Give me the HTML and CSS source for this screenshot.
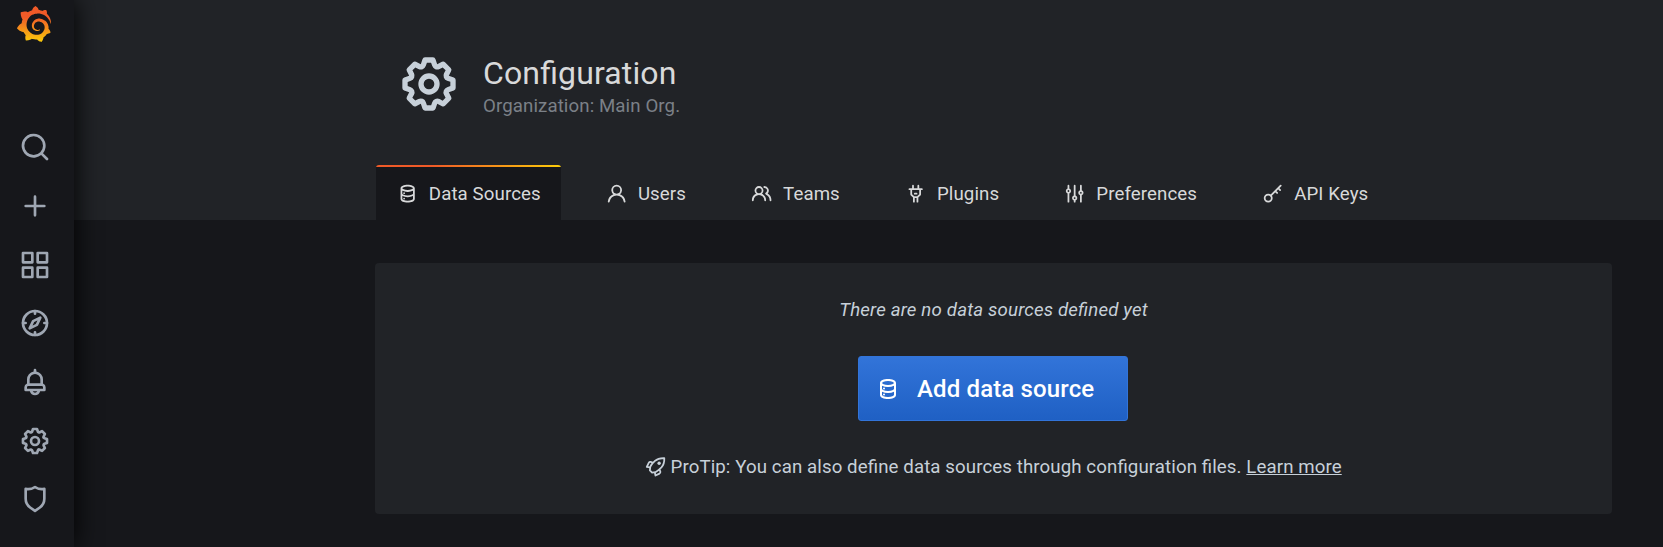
FILE: index.html
```html
<!DOCTYPE html>
<html lang="en">
<head>
<meta charset="utf-8">
<title>Configuration: Data Sources</title>
<link rel="stylesheet" href="styles.css">
</head>
<body>
<svg class="sprite" width="0" height="0">
  <symbol id="cog" viewBox="0 0 24 24"><path d="M21.32,9.55l-1.89-.63.89-1.78A1,1,0,0,0,20.13,6L18,3.87a1,1,0,0,0-1.15-.19l-1.78.89-.63-1.89A1,1,0,0,0,13.5,2h-3a1,1,0,0,0-.95.68L8.92,4.57,7.14,3.68A1,1,0,0,0,6,3.87L3.87,6a1,1,0,0,0-.19,1.15l.89,1.78-1.89.63A1,1,0,0,0,2,10.5v3a1,1,0,0,0,.68.95l1.89.63-.89,1.78A1,1,0,0,0,3.87,18L6,20.13a1,1,0,0,0,1.15.19l1.78-.89.63,1.89a1,1,0,0,0,.95.68h3a1,1,0,0,0,.95-.68l.63-1.89,1.78.89A1,1,0,0,0,18,20.13L20.13,18a1,1,0,0,0,.19-1.15l-.89-1.78,1.89-.63A1,1,0,0,0,22,13.5v-3A1,1,0,0,0,21.32,9.55ZM20,12.78l-1.2.4A2,2,0,0,0,17.64,16l.57,1.14-1.1,1.1L16,17.64a2,2,0,0,0-2.79,1.16l-.4,1.2H11.22l-.4-1.2A2,2,0,0,0,8,17.64l-1.14.57-1.1-1.1L6.36,16A2,2,0,0,0,5.2,13.18L4,12.78V11.22l1.2-.4A2,2,0,0,0,6.36,8L5.79,6.89l1.1-1.1L8,6.36A2,2,0,0,0,10.82,5.2l.4-1.2h1.56l.4,1.2A2,2,0,0,0,16,6.36l1.14-.57,1.1,1.1L17.64,8a2,2,0,0,0,1.16,2.79l1.2.4ZM12,8a4,4,0,1,0,4,4A4,4,0,0,0,12,8Zm0,6a2,2,0,1,1,2-2A2,2,0,0,1,12,14Z"/></symbol>
  <symbol id="database" viewBox="0 0 24 24"><path d="M8,16.5a1,1,0,1,0,1,1A1,1,0,0,0,8,16.5ZM12,2C8,2,4,3.37,4,6V18c0,2.63,4,4,8,4s8-1.37,8-4V6C20,3.37,16,2,12,2Zm6,16c0,.71-2.28,2-6,2s-6-1.29-6-2V14.73A13.16,13.16,0,0,0,12,16a13.16,13.16,0,0,0,6-1.27Zm0-6c0,.71-2.28,2-6,2s-6-1.29-6-2V8.73A13.16,13.16,0,0,0,12,10a13.16,13.16,0,0,0,6-1.27ZM12,8C8.28,8,6,6.71,6,6s2.28-2,6-2,6,1.29,6,2S15.72,8,12,8ZM8,10.5a1,1,0,1,0,1,1A1,1,0,0,0,8,10.5Z"/></symbol>
</svg>
<div class="app">
  <nav class="sidemenu">
    <a class="logo"><svg width="34" height="36" viewBox="8 0 335 365" preserveAspectRatio="none"><defs><linearGradient id="flame" gradientUnits="userSpaceOnUse" x1="175" y1="445" x2="175" y2="114"><stop offset="0" stop-color="#fff100"/><stop offset="1" stop-color="#f05a28"/></linearGradient></defs><path fill="url(#flame)" d="M342,161.2c-0.6-6.1-1.6-13.1-3.6-20.9c-2-7.7-5-16.2-9.4-25c-4.4-8.8-10.1-17.9-17.5-26.8c-2.9-3.5-6.1-6.9-9.5-10.2c5.1-20.3-6.2-37.9-6.2-37.9c-19.5-1.2-31.9,6.1-36.5,9.4c-0.8-0.3-1.5-0.7-2.3-1c-3.3-1.3-6.7-2.6-10.3-3.7c-3.5-1.1-7.1-2.1-10.8-3c-3.7-0.9-7.4-1.6-11.2-2.2c-0.7-0.1-1.3-0.2-2-0.3c-8.5-27.2-32.9-38.6-32.9-38.6c-27.3,17.3-32.4,41.5-32.4,41.5s-0.1,0.5-0.3,1.4c-1.5,0.4-3,0.9-4.5,1.3c-2.1,0.6-4.2,1.4-6.2,2.2c-2.1,0.8-4.1,1.6-6.2,2.5c-4.1,1.8-8.2,3.8-12.2,6c-3.9,2.2-7.7,4.6-11.4,7.1c-0.5-0.2-1-0.4-1-0.4c-37.8-14.4-71.3,2.9-71.3,2.9c-3.1,40.2,15.1,65.5,18.7,70.1c-0.9,2.5-1.7,5-2.5,7.5c-2.8,9.1-4.9,18.4-6.2,28.1c-0.2,1.4-0.4,2.8-0.5,4.2C18.8,192.7,8.5,228,8.5,228c29.1,33.5,63.1,35.6,63.1,35.6c0,0,0.1-0.1,0.1-0.1c4.3,7.7,9.3,15,14.9,21.9c2.4,2.9,4.8,5.6,7.4,8.3c-10.6,30.4,1.5,55.6,1.5,55.6c32.4,1.2,53.7-14.2,58.2-17.7c3.2,1.1,6.5,2.1,9.8,2.9c10,2.6,20.2,4.1,30.4,4.5c2.5,0.1,5.1,0.2,7.6,0.1l1.2,0l0.8,0l1.6,0l1.6-0.1l0,0.1c15.3,21.8,42.1,24.9,42.1,24.9c19.1-20.1,20.2-40.1,20.2-44.4l0,0c0,0,0-0.1,0-0.3c0-0.4,0-0.6,0-0.6l0,0c0-0.3,0-0.6,0-0.9c4-2.8,7.8-5.8,11.4-9.1c7.6-6.9,14.3-14.8,19.9-23.3c0.5-0.8,1-1.6,1.5-2.4c21.6,1.2,36.9-13.4,36.9-13.4c-3.6-22.5-16.4-33.5-19.1-35.6l0,0c0,0-0.1-0.1-0.3-0.2c-0.2-0.1-0.2-0.2-0.2-0.2c-0.1-0.1-0.3-0.2-0.5-0.3c0.1-1.4,0.2-2.7,0.3-4.1c0.2-2.4,0.2-4.9,0.2-7.3l0-1.8l0-0.9l0-1.1l-0.1-1.5l-0.1-2c0-0.7-0.1-1.3-0.2-1.9c-0.1-0.6-0.1-1.3-0.2-1.9l-0.2-1.9l-0.3-1.9c-0.4-2.5-0.8-4.9-1.4-7.4c-2.3-9.7-6.1-18.9-11-27.2c-5-8.3-11.2-15.6-18.3-21.8c-7-6.2-14.9-11.2-23.1-14.9c-8.3-3.7-16.9-6.1-25.5-7.2c-4.3-0.6-8.6-0.8-12.9-0.7l-1.6,0l-0.9,0l-0.7,0l-1.6,0.1c-0.6,0-1.2,0.1-1.7,0.1c-2.2,0.2-4.4,0.5-6.5,0.9c-8.6,1.6-16.7,4.7-23.8,9c-7.1,4.3-13.3,9.6-18.3,15.6c-5,6-8.9,12.7-11.6,19.6c-2.7,6.9-4.2,14.1-4.6,21c-0.1,1.7-0.1,3.5-0.1,5.2c0,0.4,0,0.9,0,1.3l0.1,1.4c0.1,0.8,0.1,1.7,0.2,2.5c0.3,3.5,1,6.9,1.9,10.1c1.9,6.5,4.9,12.4,8.6,17.4c3.7,5,8.2,9.1,12.9,12.4c4.7,3.2,9.8,5.5,14.8,7c5,1.5,10,2.1,14.7,2.1c1.2,0,2.3,0,3.5-0.1c0.8,0,1.6-0.1,2.4-0.3c0.9-0.1,1.7-0.2,2.6-0.4c0.6-0.1,1.1-0.2,1.6-0.4c1.1-0.2,2.1-0.6,3.1-0.9c2-0.7,4-1.5,5.7-2.4c1.8-0.9,3.4-2,5-3c0.4-0.3,0.9-0.6,1.3-1c1.6-1.3,1.9-3.7,0.6-5.3c-1.1-1.4-3.1-1.8-4.7-0.9c-0.4,0.2-0.8,0.4-1.2,0.6c-1.4,0.7-2.8,1.3-4.3,1.8c-1.5,0.5-3.1,0.9-4.7,1.2c-0.8,0.1-1.6,0.2-2.5,0.3c-0.4,0-0.8,0.1-1.3,0.1l-2.4,0c-0.5,0-1,0-1.5-0.1l-0.6,0c-0.7,0-1.4-0.2-2.1-0.3c-3.7-0.5-7.4-1.6-10.9-3.2c-3.6-1.6-7-3.8-10.1-6.6c-3.1-2.8-5.8-6.1-7.9-9.9c-2.1-3.8-3.6-8-4.3-12.4c-0.3-2.2-0.5-4.5-0.4-6.7c0-0.6,0.1-1.2,0.1-1.8l0-0.8c0-0.3,0.1-0.6,0.1-0.9c0.1-1.2,0.3-2.4,0.5-3.6c1.7-9.6,6.5-19,13.9-26.1c1.9-1.8,3.9-3.4,6-4.9c2.1-1.5,4.4-2.8,6.8-3.9c2.4-1.1,4.8-2,7.4-2.7c2.5-0.7,5.1-1.1,7.8-1.4c1.3-0.1,2.6-0.2,4-0.2l2.7,0l1.4,0.1c2.9,0.2,5.7,0.6,8.5,1.3c5.6,1.2,11.1,3.3,16.2,6.1c10.2,5.7,18.9,14.5,24.2,25.1c2.7,5.3,4.6,11,5.5,16.9c0.2,1.5,0.4,3,0.5,4.5l0.1,1.1l0.1,1.1l0,2.2l0,1l0,1.1c0,0.7-0.1,1.9-0.1,2.6c-0.1,1.6-0.3,3.3-0.5,4.9c-0.2,1.6-0.5,3.2-0.8,4.8c-0.3,1.6-0.7,3.2-1.1,4.7c-0.8,3.1-1.8,6.2-3,9.3c-2.4,6-5.6,11.8-9.4,17.1c-7.7,10.6-18.2,19.2-30.2,24.7c-6,2.7-12.3,4.7-18.8,5.7c-3.2,0.6-6.5,0.9-9.8,1l-5,0c-1.8,0-3.5-0.1-5.3-0.3c-7-0.5-13.9-1.8-20.7-3.7c-6.7-1.9-13.2-4.6-19.4-7.8c-12.3-6.6-23.4-15.6-32-26.5c-4.3-5.4-8.1-11.3-11.2-17.4c-3.1-6.1-5.6-12.6-7.4-19.1c-1.8-6.6-2.9-13.3-3.4-20.1l-0.1-1.3l0-6.1l0-2.5c0.1-3.3,0.4-6.8,0.8-10.2c0.4-3.4,1-6.9,1.7-10.3c0.7-3.4,1.5-6.8,2.5-10.2c1.9-6.7,4.3-13.2,7.1-19.3c5.7-12.2,13.1-23.1,22-31.8c2.2-2.2,4.5-4.2,6.9-6.2c2.4-1.9,4.9-3.7,7.5-5.4c2.5-1.7,5.2-3.2,7.9-4.6c1.3-0.7,2.7-1.4,4.1-2c1.4-0.6,2.8-1.2,4.2-1.8c2.8-1.2,5.7-2.2,8.7-3.1c1.4-0.4,2.9-0.9,4.4-1.3c1.5-0.4,3-0.8,4.5-1.1c1.5-0.3,3-0.7,4.6-1c1.5-0.3,3-0.5,4.6-0.8c1.6-0.2,3.2-0.4,4.9-0.6c1.4-0.2,2.8-0.3,4.2-0.5l2.2-0.2l3.9-0.2l1.7,0l2.2-0.1c2.9-0.1,5.9-0.1,8.8,0c5.8,0.2,11.5,0.9,17,1.9c11.1,2.1,21.5,5.6,31,10.3c9.5,4.6,17.9,10.3,25.3,16.5c0.9,0.8,1.8,1.6,2.7,2.4c1.7,1.6,3.4,3.2,5.1,4.8c0.8,0.8,1.6,1.6,2.4,2.5c3.1,3.3,6,6.6,8.6,10c5.2,6.7,9.4,13.5,12.7,19.9c1.2,2.4,2.3,4.8,3.4,7.1c1.5,3.8,3.2,7.6,4.3,10.9c1.5,4.4,2.6,8.3,3.5,11.7c0.3,1.4,1.6,2.3,3,2.1c1.5-0.1,2.6-1.3,2.6-2.8C342.6,170.4,342.5,166.1,342,161.2z"/></svg></a>
    <div class="side-items">
      <a><svg viewBox="0 0 24 24"><path d="M21.71,20.29,18,16.61A9,9,0,1,0,16.61,18l3.68,3.68a1,1,0,0,0,1.42,0A1,1,0,0,0,21.71,20.29ZM11,18a7,7,0,1,1,7-7A7,7,0,0,1,11,18Z"/></svg></a>
      <a><svg viewBox="0 0 24 24"><path d="M19,11H13V5a1,1,0,0,0-2,0v6H5a1,1,0,0,0,0,2h6v6a1,1,0,0,0,2,0V13h6a1,1,0,0,0,0-2Z"/></svg></a>
      <a><svg viewBox="0 0 24 24"><path class="line" d="M3,3h7v7H3ZM14,3h7v7h-7ZM3,14h7v7H3ZM14,14h7v7h-7Z"/></svg></a>
      <a><svg viewBox="0 0 24 24"><circle class="line" cx="12" cy="12" r="9"/><path class="line" d="M12,3v2M12,19v2M3,12h2M19,12h2M16,8l-5.4,2.6L8,16l5.4-2.6Z"/></svg></a>
      <a><svg viewBox="0 0 24 24"><path d="M18,13.18V10a6,6,0,0,0-5-5.91V3a1,1,0,0,0-2,0V4.09A6,6,0,0,0,6,10v3.18A3,3,0,0,0,4,16v2a1,1,0,0,0,1,1H8.14a4,4,0,0,0,7.72,0H19a1,1,0,0,0,1-1V16A3,3,0,0,0,18,13.18ZM8,10a4,4,0,0,1,8,0v3H8Zm4,10a2,2,0,0,1-1.72-1h3.44A2,2,0,0,1,12,20Zm6-3H6V16a1,1,0,0,1,1-1H17a1,1,0,0,1,1,1Z"/></svg></a>
      <a><svg><use href="#cog"/></svg></a>
      <a><svg viewBox="0 0 24 24"><path d="M19.63,3.65a1,1,0,0,0-.84-.2,8,8,0,0,1-6.22-1.27,1,1,0,0,0-1.14,0A8,8,0,0,1,5.21,3.45a1,1,0,0,0-.84.2A1,1,0,0,0,4,4.43v7.45a9,9,0,0,0,3.77,7.33l3.65,2.6a1,1,0,0,0,1.16,0l3.65-2.6A9,9,0,0,0,20,11.88V4.43A1,1,0,0,0,19.63,3.65ZM18,11.88a7,7,0,0,1-2.93,5.7L12,19.77,8.93,17.58A7,7,0,0,1,6,11.88V5.58a10,10,0,0,0,6-1.39,10,10,0,0,0,6,1.39Z"/></svg></a>
    </div>
  </nav>
  <main class="main">
    <header class="page-header">
      <div class="heading">
        <svg class="heading-icon"><use href="#cog"/></svg>
        <div>
          <h1>Configuration</h1>
          <div class="sub">Organization: Main Org.</div>
        </div>
      </div>
      <ul class="tabs">
        <li class="active"><svg><use href="#database"/></svg>Data Sources</li>
        <li><svg viewBox="0 0 24 24"><path d="M15.71,12.71a6,6,0,1,0-7.42,0,10,10,0,0,0-6.22,8.18,1,1,0,0,0,2,.22,8,8,0,0,1,15.9,0,1,1,0,0,0,1,.89h.11a1,1,0,0,0,.88-1.1A10,10,0,0,0,15.71,12.71ZM12,12a4,4,0,1,1,4-4A4,4,0,0,1,12,12Z"/></svg>Users</li>
        <li><svg viewBox="0 0 24 24"><path d="M12.3,12.22A4.92,4.92,0,0,0,14,8.5a5,5,0,0,0-10,0,4.92,4.92,0,0,0,1.7,3.72A8,8,0,0,0,1,19.5a1,1,0,0,0,2,0,6,6,0,0,1,12,0,1,1,0,0,0,2,0A8,8,0,0,0,12.3,12.22ZM9,11.5a3,3,0,1,1,3-3A3,3,0,0,1,9,11.5Zm9.74.32A5,5,0,0,0,15,3.5a1,1,0,0,0,0,2,3,3,0,0,1,3,3,3,3,0,0,1-1.5,2.59,1,1,0,0,0-.5.84,1,1,0,0,0,.45.86l.39.26.13.07a7,7,0,0,1,4,6.38,1,1,0,0,0,2,0A9,9,0,0,0,18.74,11.82Z"/></svg>Teams</li>
        <li><svg viewBox="0 0 24 24"><path d="M19,6H16V3a1,1,0,0,0-2,0V6H10V3A1,1,0,0,0,8,3V6H5A1,1,0,0,0,5,8H6v5a1,1,0,0,0,.29.71L9,16.41V21a1,1,0,0,0,2,0V17h2v4a1,1,0,0,0,2,0V16.41l2.71-2.7A1,1,0,0,0,18,13V8h1a1,1,0,0,0,0-2Zm-3,6.59L13.59,15H10.41L8,12.59V8h8ZM11,13h2a1,1,0,0,0,0-2H11a1,1,0,0,0,0,2Z"/></svg>Plugins</li>
        <li><svg viewBox="0 0 24 24"><path d="M20,8.18V3a1,1,0,0,0-2,0V8.18a3,3,0,0,0,0,5.64V21a1,1,0,0,0,2,0V13.82a3,3,0,0,0,0-5.64ZM19,12a1,1,0,1,1,1-1A1,1,0,0,1,19,12Zm-6,2.18V3a1,1,0,0,0-2,0V14.18a3,3,0,0,0,0,5.64V21a1,1,0,0,0,2,0V19.82a3,3,0,0,0,0-5.64ZM12,18a1,1,0,1,1,1-1A1,1,0,0,1,12,18ZM6,6.18V3A1,1,0,0,0,4,3V6.18a3,3,0,0,0,0,5.64V21a1,1,0,0,0,2,0V11.82A3,3,0,0,0,6,6.18ZM5,10A1,1,0,1,1,6,9,1,1,0,0,1,5,10Z"/></svg>Preferences</li>
        <li><svg viewBox="0 0 24 24"><circle class="line" cx="7" cy="17" r="4"/><path class="line" d="M9.9,14.1L21,3M18.2,5.8l2.2,2.2M14.9,9.1l2.1,2.1"/></svg>API Keys</li>
      </ul>
    </header>
    <section class="card">
      <em class="message">There are no data sources defined yet</em>
      <a class="button"><svg><use href="#database"/></svg>Add data source</a>
      <div class="protip"><svg viewBox="0 0 24 24"><path class="line" d="M5.5,16.2C5.5,12.5 6.2,10.300 8.400,8.200L11.200,5.500C13.800,3.100 17,2.100 21.700,2.300C21.900,7 20.900,10.300 18.500,12.800L15.500,15.600C13.200,17.900 11.500,18.800 8,18.800ZM8.700,7.500L6.300,6.700C5.100,6.500 4.600,7 4.200,7.700L2,12.200L5.500,12.900M16.400,15.300L17.300,17.700C17.500,18.900 17,19.400 16.300,19.800L11.800,22L11.100,18.700"/><circle cx="15.900" cy="8.200" r="1.900"/></svg><span>ProTip: You can also define data sources through configuration files. <a class="link">Learn more</a></span></div>
    </section>
  </main>
</div>
</body>
</html>
```
FILE: styles.css
```css
* { box-sizing: border-box; }
body { margin: 0; background: #16171b; color: #c7d0d9; font-family: Roboto, sans-serif; font-size: 18.667px; line-height: 28px; letter-spacing: 0.1px; font-feature-settings: "liga" 1; }
svg { display: block; fill: currentColor; flex: none; }
.sprite { position: absolute; }
.line { fill: none; stroke: currentColor; stroke-width: 2; stroke-linecap: round; stroke-linejoin: round; }
.app { display: flex; height: 547px; overflow: hidden; }
.sidemenu { width: 74px; flex: none; background: #16171b; box-shadow: 0 0 26.667px #000; position: relative; z-index: 1; color: #9fa7b3; }
.logo { display: block; padding: 6px 0 0 17px; height: 118px; }
.side-items a { display: flex; align-items: center; height: 58.667px; padding-left: 19px; }
.side-items svg { width: 32px; height: 32px; }
.main { flex: 1; min-width: 0; }
.page-header { height: 220px; background: #212327; padding-left: 302px; display: flex; flex-direction: column; justify-content: space-between; }
.heading { display: flex; padding: 52px 0 0 21px; gap: 22px; color: #c7d0d9; }
.heading-icon { width: 64px; height: 64px; }
h1 { margin: 0; font-weight: 400; font-size: 32px; line-height: 42px; letter-spacing: 0.14px; color: #d8d9da; }
.sub { color: #7b8087; line-height: 24px; }
.tabs { display: flex; list-style: none; margin: 0; padding: 0; gap: 23.8px; color: #d8d9da; }
.tabs li { display: flex; align-items: center; height: 55px; padding: 2px 20.500px 0; border-radius: 3px 3px 0 0; white-space: nowrap; }
.tabs svg { width: 21.333px; height: 21.333px; margin-right: 11px; }
.tabs .active { background: linear-gradient(90deg, #f05a28 30%, #fbca0a 99%) 0 0 / 100% 2px no-repeat #16171b; }
.card { margin: 43px 51px 0 301px; height: 251px; background: #212327; border-radius: 4px; display: flex; flex-direction: column; align-items: center; padding-top: 33px; }
.message { line-height: 28px; letter-spacing: 0.17px; }
.button { margin: 32px 1px 0 0; width: 270px; height: 65px; display: flex; align-items: center; padding-left: 17px; color: #fff; font-size: 24px; font-weight: 500; letter-spacing: 0.14px; border: 1px solid #3274d9; border-radius: 3px; background: linear-gradient(#3274d9, #1f60c4); }
.button svg { width: 24px; height: 24px; margin-right: 17px; }
.protip { display: flex; align-items: center; margin-top: 32px; white-space: nowrap; }
.protip svg { width: 21.333px; height: 21.333px; margin-right: 4px; }
.link { text-decoration: underline; }
```
